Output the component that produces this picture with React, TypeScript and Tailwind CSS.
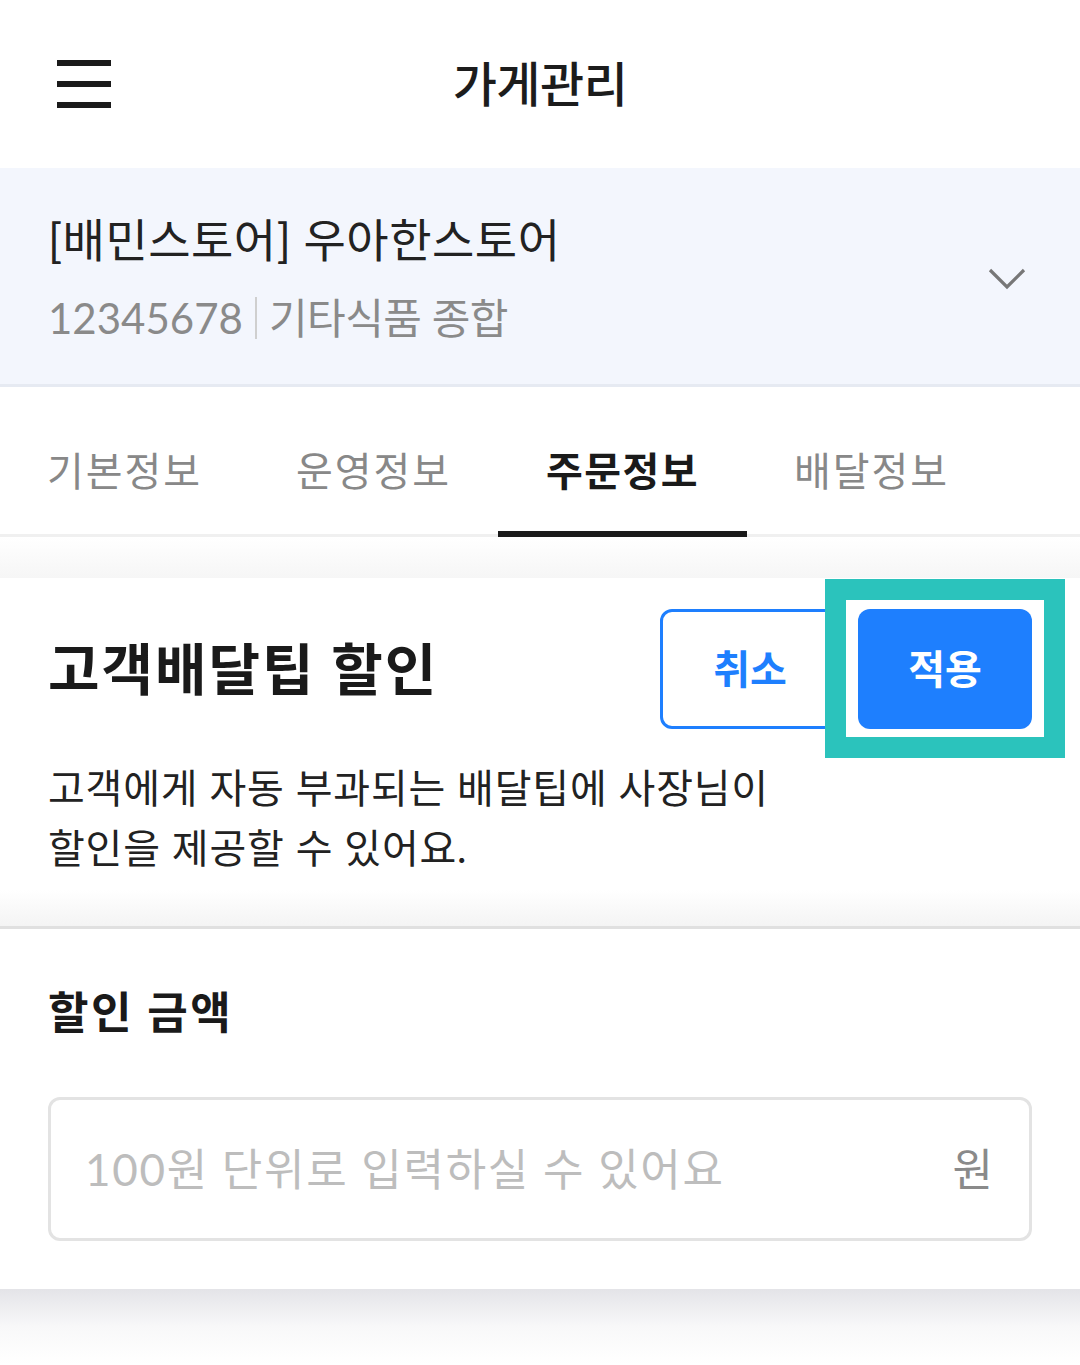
import React from "react";

const FONT = { fontFamily: "Lato, 'Noto Sans CJK KR', 'Noto Sans', sans-serif" };

export default function App() {
  const tabs = ["기본정보", "운영정보", "주문정보", "배달정보"];
  return (
    <div className="w-[1080px] h-[1365px] bg-white overflow-hidden text-[#1c1c1c]" style={FONT}>
      {/* Header */}
      <div className="relative h-[168px] flex items-center px-[57px]">
        <div className="flex flex-col gap-[15px]">
          <div className="w-[54px] h-[6px] bg-[#1a1a1a]" />
          <div className="w-[54px] h-[6px] bg-[#1a1a1a]" />
          <div className="w-[54px] h-[6px] bg-[#1a1a1a]" />
        </div>
        <div className="absolute inset-0 flex items-center justify-center">
          <span className="text-[48px] font-medium tracking-[-0.5px] leading-none">가게관리</span>
        </div>
      </div>

      {/* Store selector */}
      <div className="bg-[#f3f6fd] border-b-[3px] border-[#e6eaf2] flex items-center justify-between pl-[48px] pr-[54px] pt-[42px] pb-[36px]">
        <div>
          <div className="text-[46px] leading-[60px] tracking-[0.5px] text-[#222]">[배민스토어] 우아한스토어</div>
          <div className="mt-[18px] text-[42px] leading-[60px] tracking-[-0.5px] text-[#8a8a8a] flex items-center">
            <span className="tracking-[0px]">12345678</span>
            <span className="mx-[12px] w-[2px] h-[42px] bg-[#cfcfcf]" />
            <span>기타식품 종합</span>
          </div>
        </div>
        <svg width="38" height="22" viewBox="0 0 38 22" fill="none">
          <polyline points="2,2 19,19 36,2" stroke="#777" strokeWidth="3.2" />
        </svg>
      </div>

      {/* Tabs */}
      <div className="h-[150px] flex border-b-[3px] border-[#f0f0f0]">
        {tabs.map((t, i) => (
          <div key={t} className="relative w-[249px] h-full pt-[20px] flex items-center justify-center">
            <span
              className={
                i === 2
                  ? "text-[40px] font-bold tracking-[1.5px] text-[#1a1a1a]"
                  : "text-[40px] tracking-[2px] text-[#888]"
              }
            >
              {t}
            </span>
            {i === 2 && <div className="absolute left-0 right-0 bottom-[-3px] h-[6px] bg-[#1a1a1a]" />}
          </div>
        ))}
      </div>

      <div className="h-[41px] bg-gradient-to-b from-white to-[#f6f6f6]" />

      {/* Card 1 */}
      <div className="bg-white">
        <div className="pl-[48px] pr-[48px] pt-[31px]">
          <div className="flex items-center justify-between h-[120px]">
            <span className="text-[56px] font-bold tracking-[2px] text-[#1a1a1a]">고객배달팁 할인</span>
            <div className="flex gap-[18px]">
              <button className="w-[180px] h-[120px] rounded-[12px] border-[3px] border-[#1e7ffe] bg-white text-[#1e7ffe] text-[40px] font-bold tracking-[0px] flex items-center justify-center">
                취소
              </button>
              <div className="relative w-[174px] h-[120px]">
                <div className="absolute left-[-33px] top-[-30px] w-[240px] h-[179px] border-[21px] border-[#2bc3bc] bg-white" />
                <button className="relative z-10 w-[174px] h-[120px] rounded-[12px] bg-[#1e7ffe] text-white text-[40px] font-bold tracking-[0px] flex items-center justify-center">
                  적용
                </button>
              </div>
            </div>
          </div>
          <div className="mt-[29px] text-[40px] leading-[60px] tracking-[0.8px] text-[#222]">
            <div>고객에게 자동 부과되는 배달팁에 사장님이</div>
            <div>할인을 제공할 수 있어요.</div>
          </div>
        </div>
        <div className="h-[12px]" />
        <div className="h-[36px] bg-gradient-to-b from-white to-[#f4f4f4]" />
        <div className="h-[3px] bg-[#e0e0e0]" />
      </div>

      {/* Card 2 */}
      <div className="bg-white pl-[48px] pr-[48px] pt-[53px] pb-[48px]">
        <div className="text-[44px] leading-[60px] font-bold tracking-[2.5px] text-[#1a1a1a]">할인 금액</div>
        <div className="mt-[55px] h-[144px] rounded-[12px] border-[3px] border-[#e3e3e3] flex items-center justify-between pl-[34px] pr-[36px]">
          <span className="text-[44px] tracking-[1.7px] text-[#bdbdbd]">100원 단위로 입력하실 수 있어요</span>
          <span className="text-[44px] text-[#8a8a8a]">원</span>
        </div>
      </div>

      <div className="h-[75px] bg-gradient-to-b from-[#e4e4e8] via-[#f8f8f9] to-white" />
    </div>
  );
}
